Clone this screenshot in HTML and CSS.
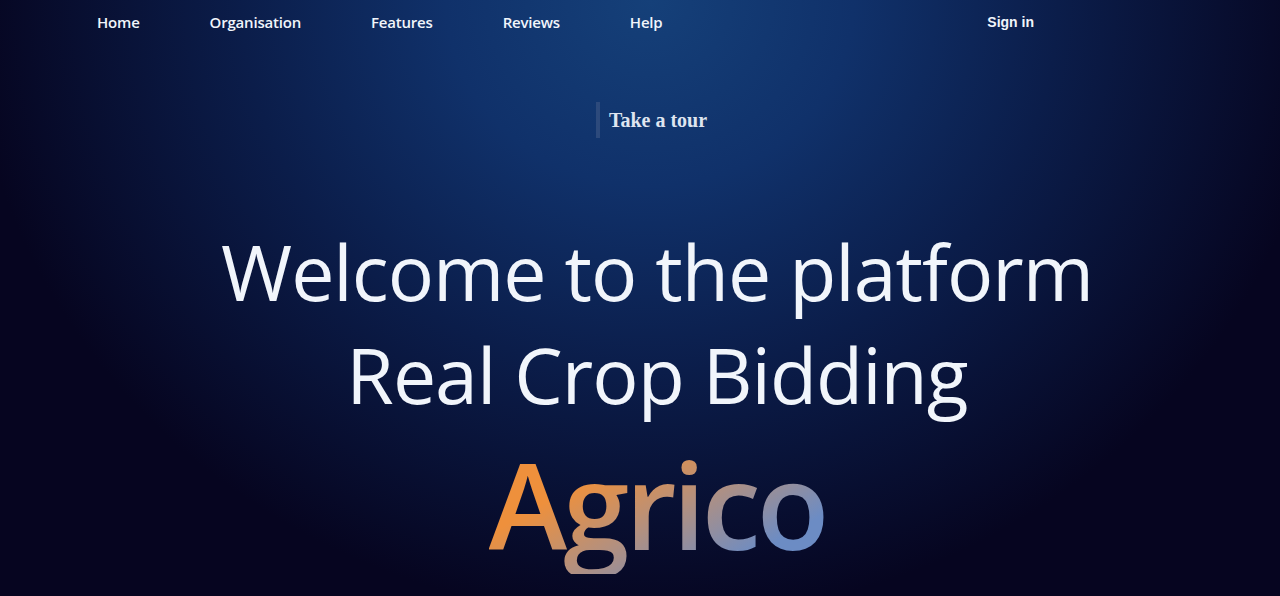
FILE: index.html
```html
<!DOCTYPE html>
<html lang="en">
<head>
<meta charset="utf-8">
<title>Agrico</title>
<link rel="stylesheet" href="styles.css">
</head>
<body>
<div class="page">
  <header class="topbar">
    <nav class="menu">
      <a class="menu-link" href="#">Home</a>
      <a class="menu-link" href="#">Organisation</a>
      <a class="menu-link" href="#">Features</a>
      <a class="menu-link" href="#">Reviews</a>
      <a class="menu-link" href="#">Help</a>
    </nav>
    <a class="signin" href="#">Sign in</a>
  </header>
  <main class="hero">
    <div class="tour">Take a tour</div>
    <h1 class="title">Welcome to the platform<br>Real Crop Bidding</h1>
    <div class="brand">Agrico</div>
  </main>
</div>
</body>
</html>
```
FILE: styles.css
```css
html, body {
  margin: 0;
  padding: 0;
  height: 100%;
}
body {
  background: #060520;
  overflow: hidden;
}
.page {
  min-height: 596px;
  background:
    radial-gradient(ellipse 680px 620px at 650px 0px, #154079 0%, #10316a 30%, #0b1d4a 60%, #060520 100%);
  font-family: "Open Sans", "Noto Sans", sans-serif;
  color: #f1f5fb;
}
.topbar {
  display: flex;
  align-items: center;
  justify-content: space-between;
  height: 44px;
  padding: 0 246px 0 97px;
}
.menu {
  display: flex;
  gap: 70px;
}
.menu-link {
  color: #f1f5fb;
  text-decoration: none;
  font-size: 15px;
  font-weight: 600;
  letter-spacing: -0.2px;
}
.signin {
  color: #f1f5fb;
  text-decoration: none;
  font-family: "Liberation Sans", Arial, sans-serif;
  font-weight: 700;
  font-size: 14px;
  margin-top: -1px;
}
.hero {
  display: flex;
  flex-direction: column;
  align-items: center;
  padding-left: 34px;
}
.tour {
  margin-top: 58px;
  border-left: 4px solid #2d4a7c;
  padding: 7px 0 7px 9px;
  font-family: "Liberation Serif", "Times New Roman", serif;
  font-weight: 700;
  font-size: 20px;
  line-height: 22px;
  color: #dfe5f0;
  margin-left: -11px;
}
.title {
  margin: 82px 0 0;
  font-weight: 400;
  font-size: 77px;
  line-height: 103px;
  text-align: center;
  letter-spacing: -1px;
  color: #f1f5fb;
}
.brand {
  font-size: 119px;
  font-weight: 600;
  line-height: 140px;
  margin-top: 8px;
  letter-spacing: -4px;
  background: linear-gradient(150deg, #ee903c 30%, #b3907f 55%, #6c8cc4 82%);
  -webkit-background-clip: text;
  background-clip: text;
  color: transparent;
}
```
